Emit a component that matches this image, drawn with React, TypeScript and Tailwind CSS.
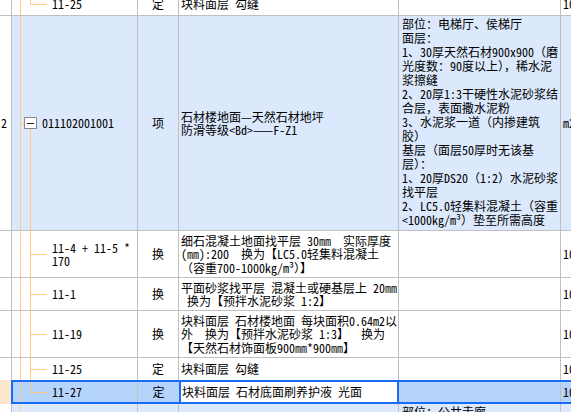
import React from 'react';

type TreeKind = 'mid' | 'end' | 'parent' | 'root';

interface Row {
  rowCls: string;
  num?: string;
  code: string[];
  type: string;
  name: string[];
  feat?: string[];
  unit: string;
  tree: TreeKind;
}

const line = 'absolute bg-[#ffcb85]';

function Tree({ kind, x }: { kind: TreeKind; x: number }) {
  // x: offset of the first vertical line inside the code cell (8 normally, 7 when selected)
  const v1 = x === 8 ? 'left-[8px]' : 'left-[7px]';
  const v2 = x === 8 ? 'left-[18px]' : 'left-[17px]';
  return (
    <>
      <div className={`${line} ${v1} top-0 bottom-0 w-px`} />
      {kind === 'mid' && <div className={`${line} ${v2} top-0 bottom-0 w-px`} />}
      {kind === 'end' && <div className={`${line} ${v2} top-0 h-1/2 w-px`} />}
      {(kind === 'mid' || kind === 'end') && (
        <div className={`${line} ${v2} top-1/2 h-px w-[17px]`} />
      )}
      {kind === 'parent' && (
        <>
          <div className={`${line} left-[8px] top-1/2 h-px w-[4px]`} />
          <div className="absolute left-[12px] top-1/2 -translate-y-1/2 w-[13px] h-[12px] border border-[#8a8a8a] bg-white flex items-center justify-center">
            <div className="w-[7px] h-px bg-[#222]" />
          </div>
          <div className={`${line} left-[18px] top-[calc(50%+6px)] bottom-0 w-px`} />
        </>
      )}
    </>
  );
}

// latin runs get half-width glyphs, like the old song-style grid font
function T({ text }: { text: string }) {
  const parts = text.split(/([\x20-\x7e]+)/);
  return (
    <>
      {parts.map((p, i) =>
        i % 2 === 1 ? (
          <span key={i} className="[font-feature-settings:'hwid']">{p}</span>
        ) : (
          <span key={i}>{p}</span>
        )
      )}
    </>
  );
}

function Lines({ items, cls }: { items: string[]; cls: string }) {
  return (
    <div className={`relative ${cls}`}>
      {items.map((t, i) => (
        <div key={i} className="whitespace-pre">
          <T text={t} />
        </div>
      ))}
    </div>
  );
}

const rows: Row[] = [
  { rowCls: 'h-[24px] -mt-[8px] border-b', code: ['11-25'], type: '定', name: ['块料面层 勾缝'], unit: '10', tree: 'end' },
  {
    rowCls: 'h-[215px] border-b bg-[#dce9fc]',
    num: '2',
    code: ['011102001001'],
    type: '项',
    name: ['石材楼地面—天然石材地坪', '防滑等级<Bd>——F-Z1'],
    feat: [
      '部位：电梯厅、侯梯厅',
      '面层：',
      '1、30厚天然石材900x900（磨',
      '光度数：90度以上），稀水泥',
      '浆擦缝',
      '2、20厚1:3干硬性水泥砂浆结',
      '合层，表面撒水泥粉',
      '3、水泥浆一道（内掺建筑',
      '胶）',
      '基层（面层50厚时无该基',
      '层）：',
      '1、20厚DS20（1:2）水泥砂浆',
      '找平层',
      '2、LC5.0轻集料混凝土（容重',
      '<1000kg/m³）垫至所需高度',
    ],
    unit: 'm2',
    tree: 'parent',
  },
  {
    rowCls: 'h-[47px] border-b',
    code: ['11-4 + 11-5 *', '170'],
    type: '换',
    name: ['细石混凝土地面找平层 30㎜  实际厚度', '(㎜):200  换为【LC5.0轻集料混凝土', '（容重700-1000kg/m³）】'],
    unit: '10',
    tree: 'mid',
  },
  {
    rowCls: 'h-[33px] border-b',
    code: ['11-1'],
    type: '换',
    name: ['平面砂浆找平层 混凝土或硬基层上 20㎜', ' 换为【预拌水泥砂浆 1:2】'],
    unit: '10',
    tree: 'mid',
  },
  {
    rowCls: 'h-[47px] border-b',
    code: ['11-19'],
    type: '换',
    name: ['块料面层 石材楼地面 每块面积0.64m2以', '外  换为【预拌水泥砂浆 1:3】  换为', '【天然石材饰面板900㎜*900㎜】'],
    unit: '10',
    tree: 'mid',
  },
  { rowCls: 'h-[22px]', code: ['11-25'], type: '定', name: ['块料面层 勾缝'], unit: '10', tree: 'mid' },
];

function NormalRow({ r }: { r: Row }) {
  const top = r.tree === 'parent';
  return (
    <div className={`flex shrink-0 border-[#c0c0c0] ${r.rowCls}`}>
      <div className="w-[12px] shrink-0 border-r border-[#c0c0c0] bg-white flex items-center pl-[1px]">
        {r.num && <T text={r.num} />}
      </div>
      <div className={`relative w-[126px] shrink-0 border-r border-[#c0c0c0] flex items-center overflow-hidden ${top ? 'pl-[30px]' : 'pl-[40px]'}`}>
        <Tree kind={r.tree} x={8} />
        <Lines items={r.code} cls="leading-[13.5px]" />
      </div>
      <div className="w-[41px] shrink-0 border-r border-[#c0c0c0] flex items-center justify-center">{r.type}</div>
      <div className="w-[220px] shrink-0 border-r border-[#c0c0c0] flex items-center pl-[2px] overflow-hidden">
        <Lines items={r.name} cls="leading-[13.5px]" />
      </div>
      <div className="w-[162px] shrink-0 border-r border-[#c0c0c0] pl-[3px] pt-px overflow-hidden">
        {r.feat && <Lines items={r.feat} cls="leading-[14px]" />}
      </div>
      <div className="flex-1 flex items-center pl-[2px] overflow-hidden whitespace-nowrap">
        <T text={r.unit} />
      </div>
    </div>
  );
}

export default function App() {
  return (
    <div className="w-[571px] h-[412px] overflow-hidden bg-white text-black text-[12px] font-['Noto_Sans_CJK_SC',sans-serif] flex flex-col">
      {rows.map((r, i) => (
        <NormalRow key={i} r={r} />
      ))}

      {/* selected row */}
      <div className="flex h-[24px] shrink-0">
        <div className="w-[11px] shrink-0 bg-[#fde8cd]" />
        <div className="flex flex-1 border-y-2 border-l-2 border-[#1a6cf7] bg-[#b4d4fb]">
          <div className="relative w-[125px] shrink-0 border-r border-[#c0c0c0] flex items-center pl-[39px]">
            <Tree kind="end" x={7} />
            <span className="relative"><T text="11-27" /></span>
          </div>
          <div className="w-[41px] shrink-0 flex items-center justify-center">定</div>
          <div className="w-[220px] shrink-0 border-x-2 border-[#1a6cf7] bg-white flex items-center pl-[1px] whitespace-pre">
            <T text="块料面层 石材底面刷养护液 光面" />
          </div>
          <div className="w-[162px] shrink-0 border-r border-[#c0c0c0]" />
          <div className="flex-1 flex items-center pl-[2px]"><T text="10" /></div>
        </div>
      </div>

      {/* next item */}
      <div className="flex h-[40px] shrink-0">
        <div className="w-[12px] shrink-0 border-r border-[#c0c0c0] bg-white" />
        <div className="flex flex-1 bg-[#dce9fc]">
          <div className="relative w-[126px] shrink-0 border-r border-[#c0c0c0]">
            <Tree kind="root" x={8} />
          </div>
          <div className="w-[41px] shrink-0 border-r border-[#c0c0c0]" />
          <div className="w-[220px] shrink-0 border-r border-[#c0c0c0]" />
          <div className="w-[162px] shrink-0 border-r border-[#c0c0c0] pl-[3px] pt-px leading-[14px]">部位：公共走廊</div>
          <div className="flex-1" />
        </div>
      </div>
    </div>
  );
}
